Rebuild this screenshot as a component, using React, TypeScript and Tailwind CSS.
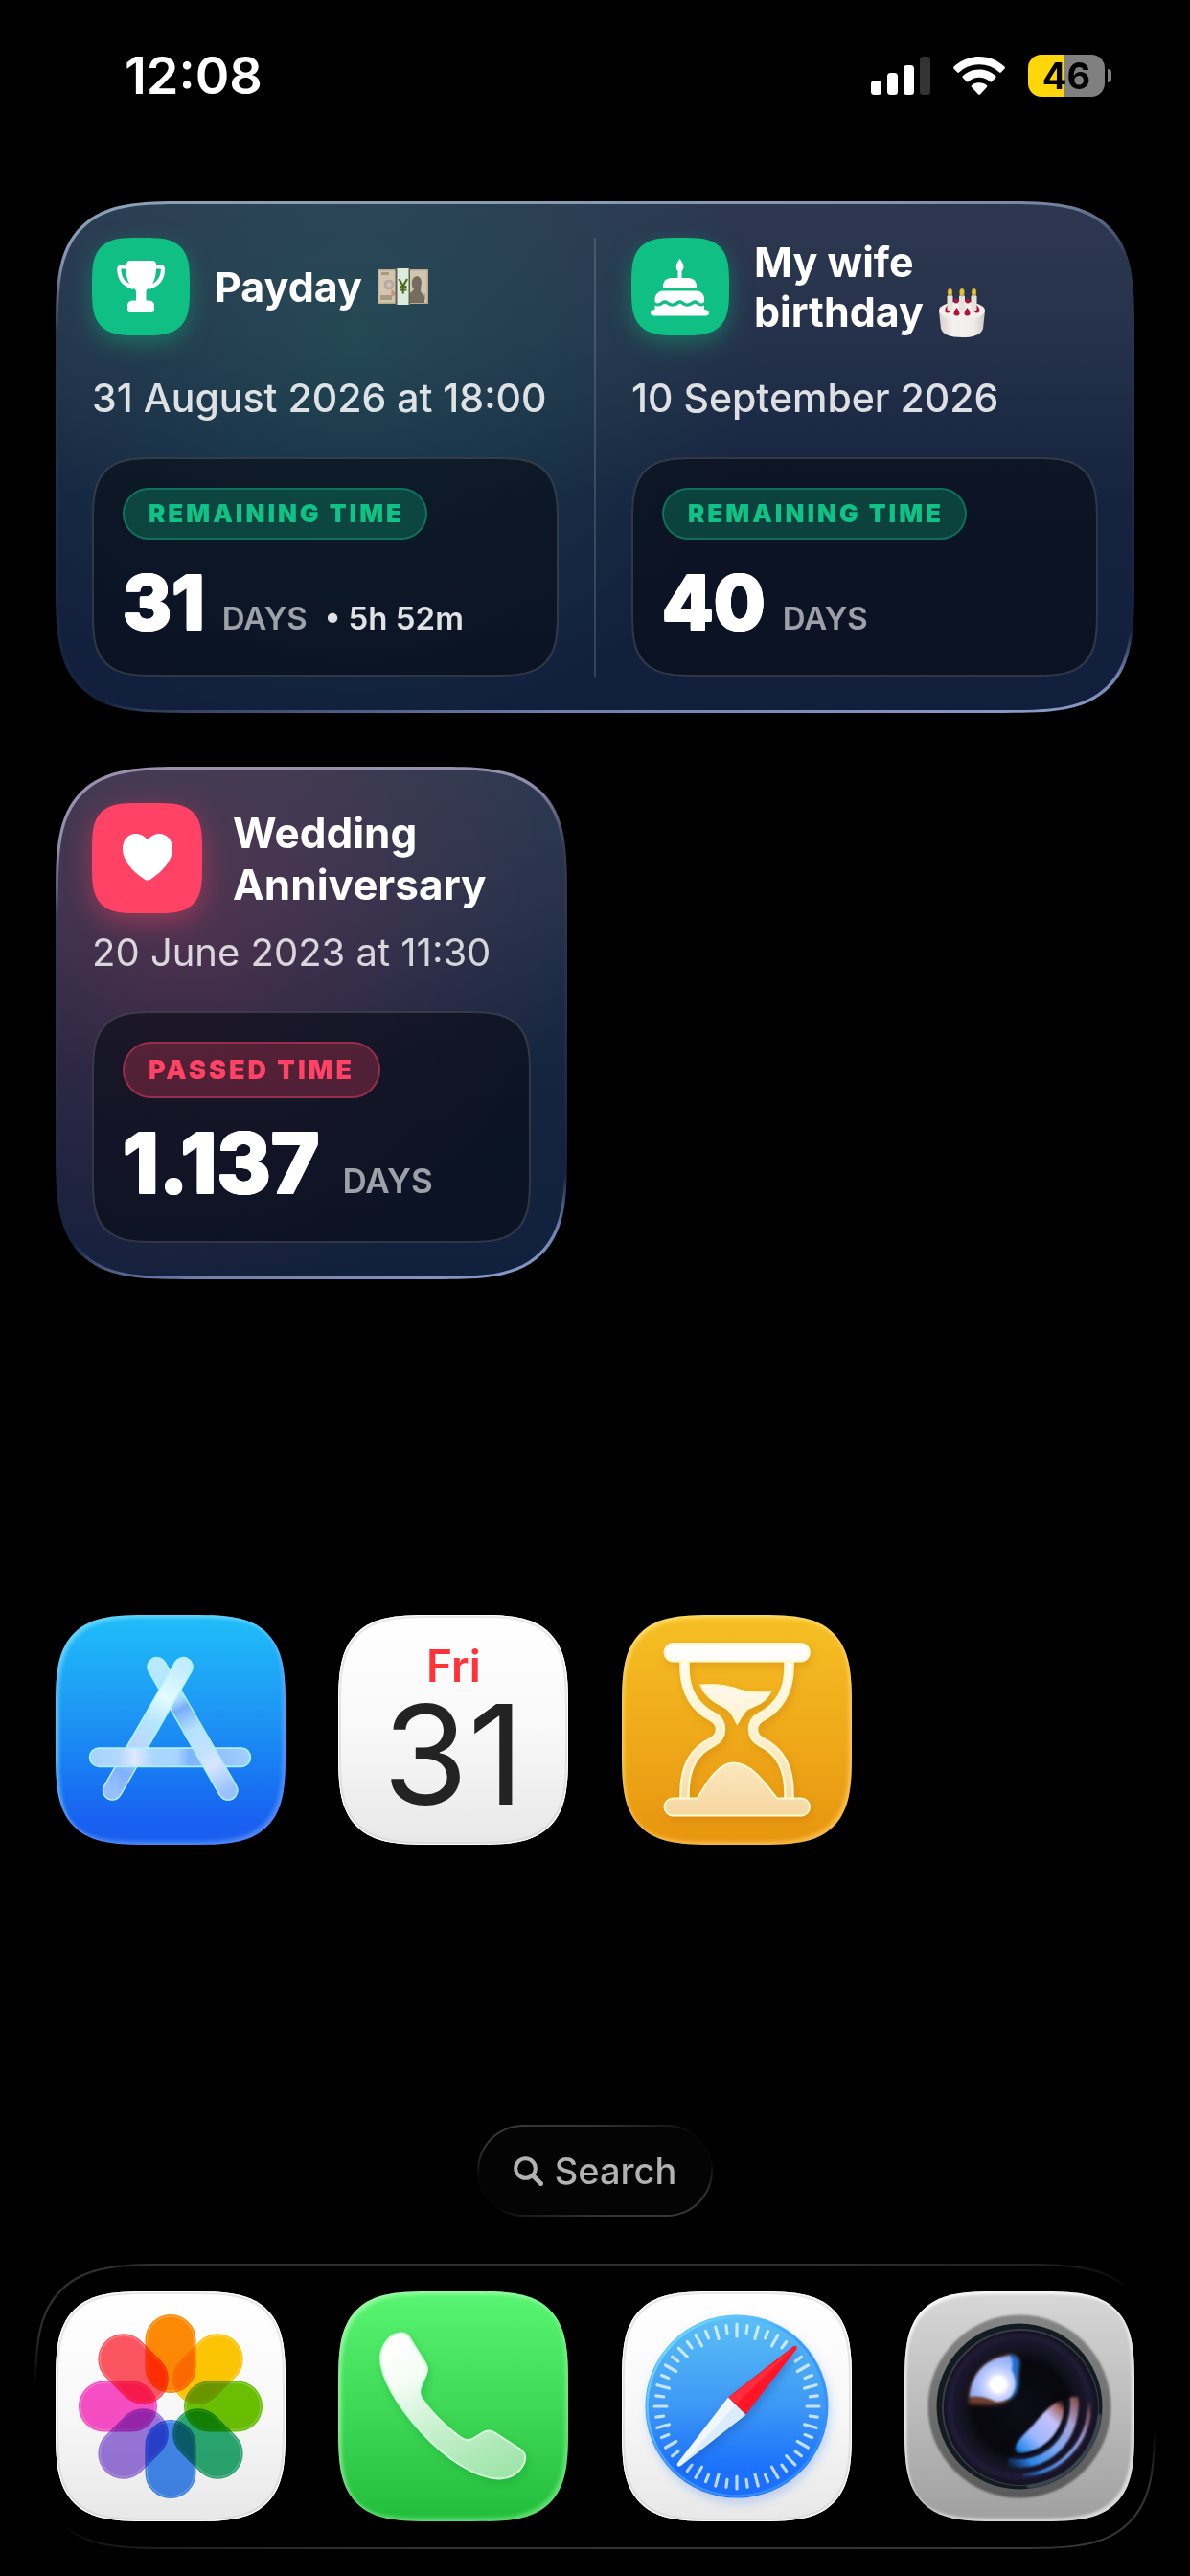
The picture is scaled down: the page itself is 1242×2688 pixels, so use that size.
import type { ReactNode } from 'react';

/* ---------- shared styles ---------- */

const WIDGET =
  'rounded-[90px] supports-[corner-shape:squircle]:rounded-[136px] [corner-shape:superellipse(1.7)] border-[3px] border-transparent p-[35px]';
const PANEL =
  'rounded-[46px] supports-[corner-shape:squircle]:rounded-[70px] [corner-shape:superellipse(1.7)] border-2 border-white/15 bg-[#060a14]/60';
const APP_TILE =
  'relative block size-60 overflow-hidden rounded-[66px] supports-[corner-shape:squircle]:rounded-[100px] [corner-shape:superellipse(1.7)]';
const BADGE =
  'flex shrink-0 items-center justify-center supports-[corner-shape:squircle]:rounded-[50px] rounded-[33px] [corner-shape:superellipse(1.7)]';
const ROUNDED_DIGITS =
  'font-extrabold leading-none text-white [text-shadow:1px_0_white,-1px_0_white,0_1px_white,0_-1px_white,1px_1px_white,-1px_1px_white,1px_-1px_white,-1px_-1px_white]';

/* ---------- status bar ---------- */

function SignalIcon() {
  return (
    <svg width="62" height="42" viewBox="0 0 62 42" aria-label="Signal strength">
      <rect x="0" y="26" width="11" height="15" rx="3.500" fill="#fff" />
      <rect x="17" y="18" width="11" height="23" rx="3.500" fill="#fff" />
      <rect x="34" y="10" width="11" height="31" rx="3.500" fill="#fff" />
      <rect x="51" y="1" width="11" height="40" rx="3.500" fill="#333" />
    </svg>
  );
}

function WifiIcon() {
  return (
    <svg width="54" height="42" viewBox="0 0 54 42" aria-label="Wi-Fi">
      <g fill="#fff">
        <path d="M27 1C37.200 1 46.500 5 53.400 11.600Q54.400 12.700 53.400 13.800L49.800 17.400Q48.800 18.300 47.700 17.300C42.200 12.100 35 9.300 27 9.300S11.800 12.100 6.300 17.300Q5.200 18.300 4.200 17.400L.6 13.800Q-.4 12.700 .6 11.600C7.500 5 16.800 1 27 1Z" />
        <path d="M27 14.500C33.600 14.500 39.500 17 44 21.100Q45.100 22.200 44 23.300L40.300 27Q39.300 28 38.200 27C35.200 24.400 31.300 22.800 27 22.800S18.800 24.400 15.800 27Q14.700 28 13.700 27L10 23.300Q8.900 22.200 10 21.100C14.500 17 20.400 14.500 27 14.500Z" />
        <path d="M27 28.200C30 28.200 32.700 29.200 34.800 30.900Q35.900 31.900 34.900 33L28.200 40.200Q27 41.400 25.800 40.200L19.100 33Q18.100 31.900 19.200 30.900C21.300 29.200 24 28.200 27 28.200Z" />
      </g>
    </svg>
  );
}

function Battery() {
  return (
    <div className="flex items-center gap-[3px]" aria-label="Battery 46 percent">
      <div className="flex h-11 w-20 items-center justify-center rounded-[14px] bg-[linear-gradient(90deg,#ffd60a_47%,#808080_47%)] text-[38px] leading-none font-bold text-black">
        46
      </div>
      <div className="h-[14px] w-1 rounded-r-full bg-[#808080]" />
    </div>
  );
}

function StatusBar() {
  return (
    <header className="flex h-[158px] items-center justify-between pr-[82px] pl-[130px]">
      <time className="text-[54px] leading-none font-semibold">12:08</time>
      <div className="flex items-center gap-6">
        <SignalIcon />
        <WifiIcon />
        <Battery />
      </div>
    </header>
  );
}

/* ---------- widget glyphs ---------- */

function TrophyIcon() {
  return (
    <svg width="102" height="102" viewBox="0 0 102 102" fill="#fff" aria-hidden="true">
      <path d="M39 24H63Q66 24 67 27L67 30C67 43 64 49 57.500 54Q56.500 55 56.500 57V66H46V57Q46 55 45 54C38 49 35.500 43 35.500 30L36 27Q37 24 39 24Z" />
      <path
        d="M37 30.500H30.500Q28.300 30.500 28.300 33C28.500 43 34 49 42 51.500M65.500 30.500H72Q74 30.500 74 33C73.800 43 68 49 60.500 51.500"
        fill="none"
        stroke="#fff"
        strokeWidth="4.200"
        strokeLinecap="round"
      />
      <path d="M42 65.500H60Q65 66 65 71V75Q65 78 62 78H40Q37 78 37 75V71Q37 66 42 65.500Z" />
    </svg>
  );
}

function CakeIcon() {
  return (
    <svg width="102" height="102" viewBox="0 0 102 102" fill="#fff" aria-hidden="true">
      <path d="M50.500 22C53 25 54.500 28 54.500 30.500Q54.500 34 52.500 35V42H48.500V35Q46.700 34 46.700 30.500C46.700 28 48 25 50.500 22Z" />
      <path d="M41 42H60Q67 43 68 49V52H33V49Q34 43 41 42Z" />
      <path d="M32 55.500H69Q76 57 76 64V67Q73 70 69.500 66.500Q66.500 64 63 66.500Q58 70.500 54 66.500Q50.500 64 47 66.500Q42.500 70.500 38.500 66.500Q35 64 31.500 66.500Q27.500 70 24.500 67V64Q25 57 32 55.500Z" />
      <path d="M24.500 70.500Q29 73 33 69.500Q35 68 37 69.500Q43 74 49 69.500Q50.700 68 52.500 69.500Q58 74 64.500 69.500Q66 68 68 69.500Q72 73 76 70.500V75H77Q81 75.500 81 78.500Q81 81.500 77.500 81.500H24Q20 81.500 20 78.500Q20 75.500 24 75H24.500Z" />
    </svg>
  );
}

function HeartIcon() {
  return (
    <svg width="115" height="115" viewBox="0 0 115 115" fill="#fff" aria-hidden="true">
      <path d="M58 38.500C61 34.500 66 32 70.500 32C78.500 32 84 39 84 47.500C84 61 73 71.500 61 79.800Q58 81.800 55 79.800C43 71.500 32 61 32 47.500C32 39 37.500 32 45.500 32C50.500 32 55 34.500 58 38.500Z" />
    </svg>
  );
}

function BanknoteEmoji() {
  return (
    <svg
      className="ml-4 inline-block align-[-3px]"
      width="53"
      height="38"
      viewBox="0 0 53 38"
      role="img"
      aria-label="Yen banknote"
    >
      <path d="M0 1H53V37H0Z" fill="#b9ab93" />
      <path d="M1.500 2.500H51.500V35.500H1.500Z" fill="#d3c6ae" />
      <circle cx="12" cy="17" r="5.500" fill="#b9a7a0" />
      <circle cx="12" cy="17" r="2.500" fill="#cfc0b5" />
      <path d="M3 28H15V33H3Z" fill="#a69a80" />
      <path d="M15 22L19 26L16 30L14 26Z" fill="#c98f88" />
      <path d="M4 4H12V7H4ZM43 27H50V33H43Z" fill="#a79a80" />
      <path d="M41 8Q46 9 46 15Q45 20 45 24L49 30V36H34V26L38 22Q35 18 36 13Q37 9 41 8Z" fill="#776c60" />
      <path d="M18.500 0H34V38H18.500Z" fill="#5a6352" />
      <path d="M20.500 0H32.500V38H20.500Z" fill="#dcebdc" />
      <path
        d="M22.500 11L26.700 18.500L31 11M26.700 18.500V26.500M23 19H30.500M23 22.500H30.500"
        fill="none"
        stroke="#4f6b1e"
        strokeWidth="2.200"
      />
    </svg>
  );
}

function CakeEmoji() {
  return (
    <svg
      className="ml-4 inline-block align-[-11px]"
      width="48"
      height="52"
      viewBox="0 0 48 52"
      role="img"
      aria-label="Birthday cake"
    >
      <defs>
        <linearGradient id="cakeSide" x1="0" x2="1" y1="0" y2="0">
          <stop offset="0" stopColor="#d6d0cc" />
          <stop offset=".3" stopColor="#f4f1ee" />
          <stop offset=".75" stopColor="#f1eeea" />
          <stop offset="1" stopColor="#cfc8c4" />
        </linearGradient>
      </defs>
      <path d="M0 24L2 43Q5 52 24 52Q43 52 46 43L48 24Z" fill="url(#cakeSide)" />
      <ellipse cx="24" cy="24" rx="24" ry="9.500" fill="#f3efec" />
      <g fill="#b3123a">
        <circle cx="18" cy="14" r="2.500" />
        <circle cx="30" cy="14" r="2.500" />
        <path d="M9 18Q13 22 12 25Q9 28 6 25Q6 21 9 18ZM39.500 18Q43 22 42.500 25Q39.500 28 36.500 25Q36 21 39.500 18ZM18.500 21Q22 25 21.500 28Q18.500 31 15.500 28Q15 25 18.500 21ZM29.500 21Q33 25 32.500 28Q29.500 31 26.500 28Q26 25 29.500 21Z" />
      </g>
      <g fill="#e9e2d6">
        <rect x="8.500" y="8" width="6" height="16" rx="1.500" />
        <rect x="21" y="8" width="6" height="16" rx="1.500" />
        <rect x="33.500" y="8" width="6" height="16" rx="1.500" />
      </g>
      <g fill="#e8c33a" stroke="#8c7a2a" strokeOpacity=".5">
        <ellipse cx="11.500" cy="5" rx="2.500" ry="4" />
        <ellipse cx="24" cy="5" rx="2.500" ry="4" />
        <ellipse cx="36.500" cy="5" rx="2.500" ry="4" />
      </g>
    </svg>
  );
}

/* ---------- widgets ---------- */

function CountdownColumn(props: {
  icon: ReactNode;
  title: ReactNode;
  date: string;
  days: string;
  extra?: string;
}) {
  return (
    <article className="flex flex-1 flex-col">
      <div className="flex h-[102px] items-center gap-[26px]">
        <div className={`${BADGE} size-[102px] bg-[#0fbf83] shadow-[0_8px_24px_rgba(15,191,131,0.4)]`}>
          {props.icon}
        </div>
        <h2 className="text-[43px] leading-[52px] font-bold">{props.title}</h2>
      </div>
      <p className="mt-[41px] text-[41px] leading-[48px] font-medium whitespace-nowrap text-white/85">{props.date}</p>
      <div className={`${PANEL} mt-[38px] px-[30px] pt-[30px] pb-9`}>
        <span className="inline-flex h-[54px] items-center rounded-full border-2 border-[#10b981]/40 bg-[#10b981]/28 pr-[22px] pl-[25px] text-[26px] leading-none font-black tracking-[3px] text-[#0fc285]">
          REMAINING TIME
        </span>
        <div className="mt-[27px] flex items-baseline gap-[18px]">
          <span className={`${ROUNDED_DIGITS} text-[78px]`}>{props.days}</span>
          <span className="text-[33px] leading-none font-semibold text-white/60">DAYS</span>
          {props.extra && <span className="text-[33px] leading-none font-semibold text-white/88">{props.extra}</span>}
        </div>
      </div>
    </article>
  );
}

function UpcomingWidget() {
  return (
    <section
      aria-label="Upcoming events"
      className={`${WIDGET} flex [background:radial-gradient(circle_420px_at_310px_140px,rgba(34,125,108,0.3),rgba(24,125,95,0)_100%)_padding-box,linear-gradient(180deg,#2d3750_0%,#26324b_25%,#15233f_58%,#111f3c_100%)_padding-box,linear-gradient(176deg,#8aa3b6_0%,#8595b5_10%,#2a3650_22%,#14223e_86%,#6f80ae_93%,#8f9fcc_100%)_border-box]`}
    >
      <CountdownColumn
        icon={<TrophyIcon />}
        title={
          <>
            Payday
            <BanknoteEmoji />
          </>
        }
        date="31 August 2026 at 18:00"
        days="31"
        extra="• 5h 52m"
      />
      <div className="mx-[37px] w-0.5 bg-white/15" />
      <CountdownColumn
        icon={<CakeIcon />}
        title={
          <>
            My wife
            <br />
            birthday
            <CakeEmoji />
          </>
        }
        date="10 September 2026"
        days="40"
      />
    </section>
  );
}

function AnniversaryWidget() {
  return (
    <section
      aria-label="Wedding anniversary"
      className={`${WIDGET} flex w-[534px] flex-col [background:radial-gradient(circle_400px_at_130px_160px,rgba(235,60,105,0.22),rgba(235,50,105,0)_100%)_padding-box,linear-gradient(180deg,#2d3a50_0%,#26334b_25%,#15253f_58%,#11203c_100%)_padding-box,linear-gradient(172deg,#a08fae_0%,#8f8fae_14%,#333a52_26%,#17223f_82%,#6f80ae_91%,#8f9fcc_100%)_border-box]`}
    >
      <div className="flex items-center gap-8">
        <div className={`${BADGE} size-[115px] bg-[#ff4265] shadow-[0_8px_28px_rgba(255,66,101,0.42)]`}>
          <HeartIcon />
        </div>
        <h2 className="text-[44px] leading-[54px] font-bold">
          Wedding
          <br />
          Anniversary
        </h2>
      </div>
      <p className="mt-[18px] text-[40px] leading-[46px] whitespace-nowrap text-white/80">20 June 2023 at 11:30</p>
      <div className={`${PANEL} mt-[38px] px-[30px] pt-[30px] pb-[38px]`}>
        <span className="inline-flex h-[59px] items-center rounded-full border-2 border-[#ff4265]/40 bg-[#ff4265]/26 pr-[25px] pl-[25px] text-[27px] leading-none font-black tracking-[3px] text-[#ff4265]">
          PASSED TIME
        </span>
        <div className="mt-[25px] flex items-baseline gap-6">
          <span className={`${ROUNDED_DIGITS} text-[86px]`}>1.137</span>
          <span className="text-[35px] leading-none font-semibold text-white/60">DAYS</span>
        </div>
      </div>
    </section>
  );
}

/* ---------- app icons ---------- */

function AppStoreIcon() {
  return (
    <svg viewBox="0 0 240 240" className="size-full" aria-hidden="true">
      <defs>
        <linearGradient id="asBack" gradientUnits="userSpaceOnUse" x1="105" y1="50" x2="180" y2="183">
          <stop offset="0" stopColor="#b9e9ff" />
          <stop offset=".28" stopColor="#b0e2ff" />
          <stop offset=".36" stopColor="#78aef8" />
          <stop offset=".52" stopColor="#b4e2ff" />
          <stop offset=".7" stopColor="#c3e3ff" />
          <stop offset=".8" stopColor="#d8e6ff" />
          <stop offset="1" stopColor="#98c2fc" />
        </linearGradient>
        <linearGradient id="asFront" gradientUnits="userSpaceOnUse" x1="133" y1="54" x2="59" y2="183">
          <stop offset="0" stopColor="#c2ecff" />
          <stop offset=".25" stopColor="#e4fcff" />
          <stop offset=".45" stopColor="#b5e5ff" />
          <stop offset=".66" stopColor="#b9d5ff" />
          <stop offset=".85" stopColor="#7fb2fc" />
          <stop offset="1" stopColor="#97bffd" />
        </linearGradient>
        <linearGradient id="asBar" gradientUnits="userSpaceOnUse" x1="35" y1="0" x2="204" y2="0">
          <stop offset="0" stopColor="#a3d3ff" />
          <stop offset=".18" stopColor="#b2d7ff" />
          <stop offset=".28" stopColor="#dfe9ff" />
          <stop offset=".4" stopColor="#a9d6ff" />
          <stop offset=".54" stopColor="#a6d6ff" />
          <stop offset=".62" stopColor="#7fb4fb" />
          <stop offset=".8" stopColor="#8fc2fc" />
          <stop offset="1" stopColor="#a3cfff" />
        </linearGradient>
      </defs>
      <g strokeLinecap="round" fill="none">
        <path d="M105.700 54.300L180 183.300" stroke="#a8f2ff" strokeWidth="21" />
        <path d="M105.700 54.300L180 183.300" stroke="url(#asBack)" strokeWidth="18" />
        <path d="M59.300 183.300L133.300 54.300" stroke="#b4f4ff" strokeWidth="21" />
        <path d="M59.300 183.300L133.300 54.300" stroke="url(#asFront)" strokeWidth="18" />
        <path d="M45.300 148.700H193.700" stroke="#aef2ff" strokeWidth="21" />
        <path d="M45.300 148.700H193.700" stroke="url(#asBar)" strokeWidth="17.500" />
        <path d="M142 117.500L180 183.300" stroke="#aeeaff" strokeWidth="21" strokeLinecap="butt" />
        <path d="M158 145L180 183.300" stroke="#aeeaff" strokeWidth="21" />
        <path d="M140 114L180 183.300" stroke="url(#asBack)" strokeWidth="18" />
      </g>
    </svg>
  );
}

function HourglassIcon() {
  return (
    <svg viewBox="0 0 240 240" className="size-full" aria-hidden="true">
      <defs>
        <linearGradient id="hgFill" gradientUnits="userSpaceOnUse" x1="0" y1="30" x2="0" y2="210">
          <stop offset="0" stopColor="#ffffff" />
          <stop offset=".45" stopColor="#fff3d6" />
          <stop offset="1" stopColor="#f6d7a0" />
        </linearGradient>
        <filter id="hgShadow" x="-20%" y="-20%" width="140%" height="140%">
          <feDropShadow dx="2" dy="4" stdDeviation="5" floodColor="#b86a00" floodOpacity=".3" />
        </filter>
      </defs>
      <g filter="url(#hgShadow)">
        <g fill="none" stroke="#fff8d0" strokeWidth="10.500">
          <path d="M65.500 44V55C65.500 80 77 97 94 106C106 112 106 127 94 133C75 142 65.500 160 65.500 186V196" />
          <path d="M174.500 44V55C174.500 80 163 97 146 106C134 112 134 127 146 133C165 142 174.500 160 174.500 186V196" />
        </g>
        <g fill="none" stroke="url(#hgFill)" strokeWidth="6">
          <path d="M65.500 44V55C65.500 80 77 97 94 106C106 112 106 127 94 133C75 142 65.500 160 65.500 186V196" />
          <path d="M174.500 44V55C174.500 80 163 97 146 106C134 112 134 127 146 133C165 142 174.500 160 174.500 186V196" />
        </g>
        <g fill="url(#hgFill)" stroke="#fff9d2" strokeWidth="2">
          <path d="M82.500 73.500C100 71.500 114 75 124 79C134 82 147 81.500 155 80.500C150 90 144 93 134 97C127 99 125 107 120.300 113.500C117 107 114 99 105 95C94 90 87 84 82.500 73.500Z" />
          <path d="M53.500 191.500H79C90 172 102 154.500 116.500 154.500C134 154.500 147 172 162 191.500H187A9 9 0 0 1 187 209.500H53.500A9 9 0 0 1 53.500 191.500Z" />
          <rect x="44.500" y="30" width="151.500" height="18.500" rx="9.200" />
        </g>
      </g>
    </svg>
  );
}

const PETALS = [
  { angle: 0, fill: '#ff8a05' },
  { angle: 45, fill: '#ffc704' },
  { angle: 90, fill: '#6cc404' },
  { angle: 135, fill: '#2bab72' },
  { angle: 180, fill: '#438af0' },
  { angle: 225, fill: '#9c78df' },
  { angle: 270, fill: '#fb4fc8' },
  { angle: 315, fill: '#ff5663' },
];

function PhotosIcon() {
  return (
    <svg viewBox="0 0 240 240" className="size-full" aria-hidden="true">
      {PETALS.map((p) => (
        <g key={p.angle} transform={`rotate(${p.angle} 120 120)`} className="mix-blend-multiply">
          <rect x="93.500" y="24" width="53" height="82" rx="26.500" fill={p.fill} />
          <rect x="95.500" y="26" width="49" height="78" rx="24.500" fill="none" stroke="#fff" strokeOpacity=".22" strokeWidth="1.500" />
        </g>
      ))}
    </svg>
  );
}

function PhoneIcon() {
  return (
    <svg viewBox="0 0 240 240" className="size-full" aria-hidden="true">
      <defs>
        <linearGradient id="phFill" gradientUnits="userSpaceOnUse" x1="75" y1="45" x2="150" y2="200">
          <stop offset="0" stopColor="#ffffff" />
          <stop offset=".25" stopColor="#f4fcf4" />
          <stop offset=".6" stopColor="#c4f0cb" />
          <stop offset="1" stopColor="#9fe5aa" />
        </linearGradient>
        <filter id="phShadow" x="-20%" y="-20%" width="140%" height="140%">
          <feDropShadow dx="2" dy="4" stdDeviation="5" floodColor="#0c8a2a" floodOpacity=".3" />
        </filter>
      </defs>
      <path
        filter="url(#phShadow)"
        fill="url(#phFill)"
        stroke="#d4fbdc"
        strokeWidth="2"
        d="M65 43.500Q70.500 43 74 47.500L91 75Q94.500 81 91.500 87L86 100Q84 105.500 86.500 110.500C96 125 114 143 129 153Q134.500 156.500 140 154L150.500 147.500Q157.500 143.500 163.500 147.500L190.500 165Q197 170 194.500 178C190 190 179 195.500 167.500 195.500C142 194.500 112 174 87 147C60 118 44 88 44 69C45 54 56 43.500 65 43.500Z"
      />
    </svg>
  );
}

const TICKS = Array.from({ length: 48 }, (_, i) => i).filter((i) => i !== 6 && i !== 30);

function SafariIcon() {
  return (
    <svg viewBox="0 0 240 240" className="size-full" aria-hidden="true">
      <defs>
        <linearGradient id="sfDial" x1="0" x2="0" y1="0" y2="1">
          <stop offset="0" stopColor="#5cc0f5" />
          <stop offset=".5" stopColor="#3d98f5" />
          <stop offset=".85" stopColor="#1a70fb" />
          <stop offset="1" stopColor="#1a6dfc" />
        </linearGradient>
        <linearGradient id="sfRim" x1="0" x2="1" y1="0" y2="1">
          <stop offset="0" stopColor="#7ff0ff" />
          <stop offset=".5" stopColor="#3f97ff" />
          <stop offset="1" stopColor="#2a86ff" />
        </linearGradient>
        <filter id="sfShadow" x="-20%" y="-20%" width="140%" height="140%">
          <feDropShadow dx="2" dy="5" stdDeviation="5" floodColor="#1a6dfc" floodOpacity=".25" />
        </filter>
      </defs>
      <circle cx="120" cy="120" r="95.500" fill="url(#sfDial)" filter="url(#sfShadow)" />
      <circle cx="120" cy="120" r="93.500" fill="none" stroke="url(#sfRim)" strokeWidth="2.500" />
      <g stroke="#e6f5ff" strokeOpacity=".8" strokeWidth="3.200" strokeLinecap="round">
        {TICKS.map((i) => (
          <line
            key={i}
            x1="120"
            x2="120"
            y1={i % 2 ? 35 : 34}
            y2={i % 2 ? 43 : 47}
            transform={`rotate(${i * 7.5} 120 120)`}
          />
        ))}
      </g>
      <g className="drop-shadow-[3px_4px_4px_rgba(10,60,160,0.3)]">
        <path d="M111 110.500L179.500 57Q183.500 56 182.500 60L129.300 128.700Z" fill="#ff1526" />
        <path d="M111 110.500L129.300 128.700L61.500 182Q57 184 57.800 179.500Z" fill="#f1f7ff" />
      </g>
      <path d="M120 117L180.500 58.500L111 111.500Z" fill="#ff5a6c" fillOpacity=".35" />
      <path d="M129.300 128.700L61.500 182L118 119Z" fill="#cfe2fb" fillOpacity=".6" />
    </svg>
  );
}

function CameraIcon() {
  return (
    <svg viewBox="0 0 240 240" className="size-full" aria-hidden="true">
      <defs>
        <linearGradient id="cmRing" x1="0" x2="0" y1="0" y2="1">
          <stop offset="0" stopColor="#868686" />
          <stop offset="1" stopColor="#595959" />
        </linearGradient>
        <radialGradient id="cmLens" cx=".5" cy=".5" r=".5">
          <stop offset="0" stopColor="#0c0d18" />
          <stop offset=".6" stopColor="#07070c" />
          <stop offset=".75" stopColor="#13121f" />
          <stop offset=".9" stopColor="#1c1830" />
          <stop offset="1" stopColor="#14131f" />
        </radialGradient>
        <radialGradient id="cmGlow" gradientUnits="userSpaceOnUse" cx="98" cy="97" r="36">
          <stop offset="0" stopColor="#ffffff" />
          <stop offset=".2" stopColor="#ffffff" />
          <stop offset=".34" stopColor="#d3dcff" />
          <stop offset=".6" stopColor="#a9bdfb" />
          <stop offset="1" stopColor="#7f9cf0" />
        </radialGradient>
        <linearGradient id="cmArc" gradientUnits="userSpaceOnUse" x1="115" y1="175" x2="172" y2="118">
          <stop offset="0" stopColor="#0a5fd0" stopOpacity="0" />
          <stop offset=".14" stopColor="#2487ee" />
          <stop offset=".38" stopColor="#9db6ff" />
          <stop offset=".7" stopColor="#c4c2f8" />
          <stop offset=".88" stopColor="#a0605c" />
          <stop offset="1" stopColor="#40201c" stopOpacity="0" />
        </linearGradient>
        <linearGradient id="cmOuterArc" gradientUnits="userSpaceOnUse" x1="112" y1="190" x2="196" y2="112">
          <stop offset="0" stopColor="#0a5fd0" stopOpacity="0" />
          <stop offset=".2" stopColor="#2f86e8" />
          <stop offset=".45" stopColor="#7fa6f5" />
          <stop offset=".7" stopColor="#a9a4d8" />
          <stop offset=".88" stopColor="#8a5658" />
          <stop offset="1" stopColor="#40201c" stopOpacity="0" />
        </linearGradient>
        <filter id="cmBlur2" x="-30%" y="-30%" width="160%" height="160%">
          <feGaussianBlur stdDeviation="2" />
        </filter>
        <filter id="cmBlur1" x="-30%" y="-30%" width="160%" height="160%">
          <feGaussianBlur stdDeviation=".8" />
        </filter>
      </defs>
      <circle cx="120" cy="120" r="95.500" fill="url(#cmRing)" filter="url(#cmBlur1)" />
      <circle cx="120" cy="120" r="86.500" fill="#111b20" />
      <circle cx="121" cy="121" r="82" fill="#3b3a48" />
      <circle cx="121.500" cy="121.500" r="80.500" fill="url(#cmLens)" />
      <circle cx="120" cy="120" r="73" fill="none" stroke="#231f38" strokeWidth="4" filter="url(#cmBlur2)" />
      <path
        d="M67 117C66 90 84 68 111 66Q121 67 119 78C117 90 120 97 114 107Q108 117 96 118Q78 119 67 117Z"
        fill="#96543f"
        fillOpacity=".75"
        filter="url(#cmBlur2)"
      />
      <path d="M108 66Q122 67 119 80C117 90 121 98 115 107Q110 113 105 112Z" fill="#1673dc" filter="url(#cmBlur2)" />
      <path
        d="M68 110C69 88 84 69 110 67Q114 72 112 82Q120 98 111 110Q104 116 95 115Q80 108 68 110Z"
        fill="url(#cmGlow)"
        filter="url(#cmBlur1)"
      />
      <circle cx="98" cy="97" r="8" fill="#fff" filter="url(#cmBlur1)" />
      <path
        d="M167 112C169 142 148 169 117 169C112 161 122 152 131 143C143 130 150 118 167 112Z"
        fill="url(#cmArc)"
        filter="url(#cmBlur1)"
      />
      <path d="M170 112A51 54 0 0 1 112 172" fill="none" stroke="#101226" strokeWidth="3" />
      <path d="M177 110A57 62 0 0 1 108 178" fill="none" stroke="url(#cmOuterArc)" strokeWidth="9" filter="url(#cmBlur1)" />
      <path d="M193 116A74 74 0 0 1 124 192" fill="none" stroke="url(#cmOuterArc)" strokeWidth="3.500" filter="url(#cmBlur1)" />
      <path d="M204 128A84 84 0 0 1 128 204" fill="none" stroke="#46525e" strokeWidth="3" filter="url(#cmBlur1)" />
    </svg>
  );
}

function CalendarFace() {
  return (
    <span className="flex size-full flex-col items-center">
      <span className="mt-[26px] text-[46px] leading-[54px] font-semibold text-[#ff3338]">Fri</span>
      <span className="text-[144px] leading-[132px] font-normal text-[#232323]">31</span>
    </span>
  );
}

function AppIcon(props: { name: string; tile: string; children: ReactNode }) {
  return (
    <button type="button" aria-label={props.name} className={`${APP_TILE} ${props.tile}`}>
      {props.children}
    </button>
  );
}

const WHITE_TILE =
  'bg-gradient-to-b from-white via-[#f8f8f8] to-[#e8e8e8] shadow-[inset_0_0_0_1px_#ffffff,inset_0_0_0_3px_rgba(205,205,208,0.45)]';

/* ---------- page ---------- */

export default function App() {
  return (
    <div className="flex min-h-screen flex-col bg-black font-['Inter','Liberation_Sans',sans-serif] text-white">
      <StatusBar />

      <main className="flex flex-col gap-14 px-[58px] pt-[52px]">
        <UpcomingWidget />
        <AnniversaryWidget />
      </main>

      <nav aria-label="Apps" className="mt-[350px] grid grid-cols-[repeat(4,240px)] justify-between px-[58px]">
        <AppIcon
          name="App Store"
          tile="bg-gradient-to-b from-[#20baf8] from-5% via-[#1e94f4] via-45% to-[#1a60f0] to-90% shadow-[inset_3px_3px_4px_rgba(150,235,255,0.6),inset_-3px_-3px_4px_rgba(140,180,255,0.5)]"
        >
          <AppStoreIcon />
        </AppIcon>
        <AppIcon name="Calendar" tile={WHITE_TILE}>
          <CalendarFace />
        </AppIcon>
        <AppIcon
          name="Countdown"
          tile="bg-gradient-to-b from-[#f6c024] to-[#e8950e] shadow-[inset_2px_3px_4px_rgba(255,240,150,0.6),inset_-3px_-3px_4px_rgba(255,215,120,0.6)]"
        >
          <HourglassIcon />
        </AppIcon>
      </nav>

      <div className="flex-1" />

      <button
        type="button"
        className="flex h-24 w-[246px] items-center justify-center gap-3 self-center rounded-full border-2 border-transparent text-[38px] leading-none font-medium text-[#b2b2b2] [background:linear-gradient(#040404,#040404)_padding-box,linear-gradient(168deg,#3a3a3a_0%,#333_18%,#060606_38%,#060606_62%,#333_82%,#3a3a3a_100%)_border-box]"
      >
        <svg width="31" height="31" viewBox="0 0 31 31" fill="none" stroke="#b2b2b2" strokeLinecap="round" aria-hidden="true">
          <circle cx="12.500" cy="12.500" r="10.300" strokeWidth="4" />
          <path d="M20.500 20.500L28.500 28.500" strokeWidth="5" />
        </svg>
        Search
      </button>

      <footer className="mx-9 mt-[49px] mb-7 grid grid-cols-[repeat(4,240px)] justify-between rounded-[94px] supports-[corner-shape:squircle]:rounded-[140px] [corner-shape:superellipse(1.7)] border-2 border-transparent px-5 py-[27px] [background:linear-gradient(#000,#000)_padding-box,linear-gradient(175deg,#303030_0%,#303030_18%,#000_32%,#000_68%,#303030_82%,#363636_100%)_border-box]">
        <AppIcon name="Photos" tile={WHITE_TILE}>
          <PhotosIcon />
        </AppIcon>
        <AppIcon
          name="Phone"
          tile="bg-gradient-to-b from-[#58f672] to-[#22bd3c] shadow-[inset_3px_3px_4px_rgba(200,255,200,0.6),inset_-3px_-3px_4px_rgba(160,255,170,0.5)]"
        >
          <PhoneIcon />
        </AppIcon>
        <AppIcon name="Safari" tile={WHITE_TILE}>
          <SafariIcon />
        </AppIcon>
        <AppIcon
          name="Camera"
          tile="bg-gradient-to-b from-[#d8d8d8] to-[#a0a0a0] shadow-[inset_2px_3px_3px_rgba(255,255,255,0.8),inset_-3px_-3px_3px_rgba(255,255,255,0.6)]"
        >
          <CameraIcon />
        </AppIcon>
      </footer>
    </div>
  );
}
